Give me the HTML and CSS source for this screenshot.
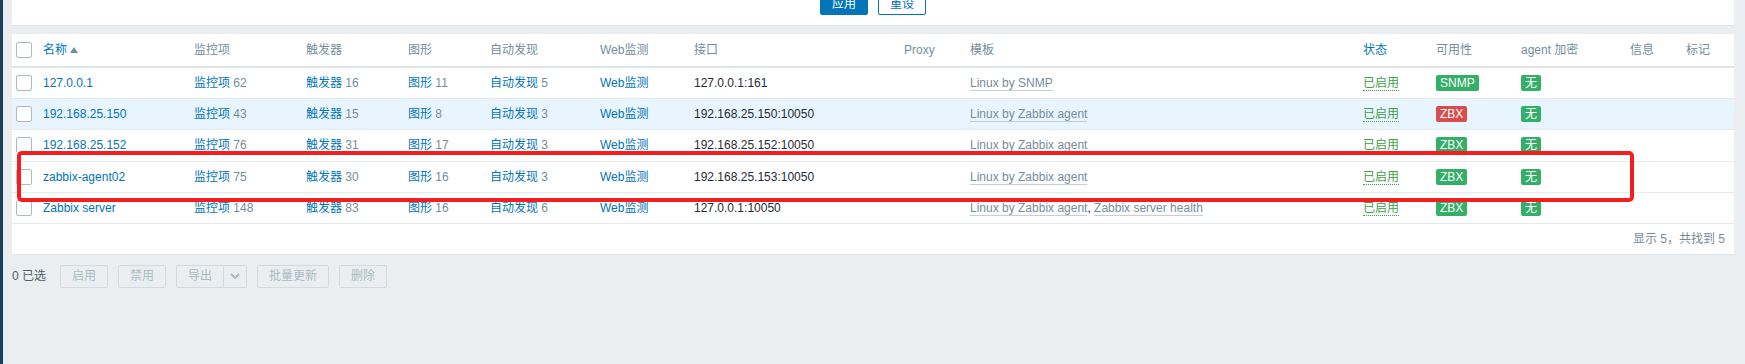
FILE: index.html
```html
<!DOCTYPE html>
<html>
  <head>
    <link rel="stylesheet" href="styles.css">
  </head>
  <body>
    <div class="page">
      <div class="rail"></div>
      <div class="main">
        <div class="filter">
          <button class="btn primary">应用</button>
          <button class="btn outline">重设</button>
        </div>

        <div class="list">
          <table>
            <colgroup>
              <col class="w-cb"><col class="w-name"><col class="w-items"><col class="w-trig"><col class="w-graph">
              <col class="w-disc"><col class="w-web"><col class="w-iface"><col class="w-proxy"><col class="w-tpl">
              <col class="w-status"><col class="w-avail"><col class="w-enc"><col class="w-info"><col class="w-tags">
            </colgroup>
            <thead>
              <tr>
                <th class="cb"><span class="check"></span></th>
                <th><a class="sort">名称</a><span class="arrow"></span></th>
                <th>监控项</th>
                <th>触发器</th>
                <th>图形</th>
                <th>自动发现</th>
                <th>Web监测</th>
                <th>接口</th>
                <th>Proxy</th>
                <th>模板</th>
                <th><a class="sort">状态</a></th>
                <th>可用性</th>
                <th>agent 加密</th>
                <th>信息</th>
                <th>标记</th>
              </tr>
            </thead>
            <tbody>
              <tr>
                <td class="cb"><span class="check"></span></td>
                <td><a>127.0.0.1</a></td>
                <td><a>监控项</a> <sup>62</sup></td>
                <td><a>触发器</a> <sup>16</sup></td>
                <td><a>图形</a> <sup>11</sup></td>
                <td><a>自动发现</a> <sup>5</sup></td>
                <td><a>Web监测</a></td>
                <td class="plain">127.0.0.1:161</td>
                <td></td>
                <td><span class="tpl">Linux by SNMP</span></td>
                <td><span class="on">已启用</span></td>
                <td><span class="badge ok">SNMP</span></td>
                <td><span class="badge ok">无</span></td>
                <td></td>
                <td></td>
              </tr>
              <tr class="hover">
                <td class="cb"><span class="check"></span></td>
                <td><a>192.168.25.150</a></td>
                <td><a>监控项</a> <sup>43</sup></td>
                <td><a>触发器</a> <sup>15</sup></td>
                <td><a>图形</a> <sup>8</sup></td>
                <td><a>自动发现</a> <sup>3</sup></td>
                <td><a>Web监测</a></td>
                <td class="plain">192.168.25.150:10050</td>
                <td></td>
                <td><span class="tpl">Linux by Zabbix agent</span></td>
                <td><span class="on">已启用</span></td>
                <td><span class="badge bad">ZBX</span></td>
                <td><span class="badge ok">无</span></td>
                <td></td>
                <td></td>
              </tr>
              <tr>
                <td class="cb"><span class="check"></span></td>
                <td><a>192.168.25.152</a></td>
                <td><a>监控项</a> <sup>76</sup></td>
                <td><a>触发器</a> <sup>31</sup></td>
                <td><a>图形</a> <sup>17</sup></td>
                <td><a>自动发现</a> <sup>3</sup></td>
                <td><a>Web监测</a></td>
                <td class="plain">192.168.25.152:10050</td>
                <td></td>
                <td><span class="tpl">Linux by Zabbix agent</span></td>
                <td><span class="on">已启用</span></td>
                <td><span class="badge ok">ZBX</span></td>
                <td><span class="badge ok">无</span></td>
                <td></td>
                <td></td>
              </tr>
              <tr>
                <td class="cb"><span class="check"></span></td>
                <td><a>zabbix-agent02</a></td>
                <td><a>监控项</a> <sup>75</sup></td>
                <td><a>触发器</a> <sup>30</sup></td>
                <td><a>图形</a> <sup>16</sup></td>
                <td><a>自动发现</a> <sup>3</sup></td>
                <td><a>Web监测</a></td>
                <td class="plain">192.168.25.153:10050</td>
                <td></td>
                <td><span class="tpl">Linux by Zabbix agent</span></td>
                <td><span class="on">已启用</span></td>
                <td><span class="badge ok">ZBX</span></td>
                <td><span class="badge ok">无</span></td>
                <td></td>
                <td></td>
              </tr>
              <tr>
                <td class="cb"><span class="check"></span></td>
                <td><a>Zabbix server</a></td>
                <td><a>监控项</a> <sup>148</sup></td>
                <td><a>触发器</a> <sup>83</sup></td>
                <td><a>图形</a> <sup>16</sup></td>
                <td><a>自动发现</a> <sup>6</sup></td>
                <td><a>Web监测</a></td>
                <td class="plain">127.0.0.1:10050</td>
                <td></td>
                <td><span class="tpl">Linux by Zabbix agent</span>, <span class="tpl">Zabbix server health</span></td>
                <td><span class="on">已启用</span></td>
                <td><span class="badge ok">ZBX</span></td>
                <td><span class="badge ok">无</span></td>
                <td></td>
                <td></td>
              </tr>
            </tbody>
          </table>
          <div class="paging">显示 5，共找到 5</div>
        </div>

        <div class="actions">
          <span class="selected">0 已选</span>
          <button class="btn off">启用</button>
          <button class="btn off">禁用</button>
          <span class="split">
            <button class="btn off">导出</button><button class="btn off caret">
              <svg width="10" height="6" viewBox="0 0 10 6"><path d="M1 1l4 4 4-4" fill="none" stroke="#acbbc2" stroke-width="2"/></svg>
            </button>
          </span>
          <button class="btn off wide">批量更新</button>
          <button class="btn off">删除</button>
        </div>
      </div>
    </div>
    <div class="mark"></div>
  </body>
</html>
```

FILE: styles.css
```css
body { margin:0; background:#ebeef0; font-family:"Liberation Sans", Arial, "Noto Sans CJK SC", sans-serif; font-size:12px; line-height:14px; color:#1f2c33; }
.page { display:flex; min-height:364px; }
.rail { width:3px; background:#173f5f; flex-shrink:0; }
.main { flex:1; padding:0 11px 0 9px; }

.btn { font-family:inherit; font-size:12px; line-height:14px; height:23px; padding:0 10px; border-radius:2px; border:1px solid transparent; cursor:pointer; }
.btn.primary { background:#0275b8; border-color:#0275b8; color:#fff; width:48px; }
.btn.outline { background:#fff; border-color:#0275b8; color:#0275b8; width:48px; }
.btn.off { background:#ebeef0; border-color:#d4dadd; color:#acbbc2; width:48px; padding:0; }
.btn.off.wide { width:72px; }

.filter { background:#fff; height:26px; border-bottom:1px solid #dfe4e7; box-sizing:border-box; display:flex; justify-content:center; gap:10px; overflow:hidden; }
.filter .btn { margin-top:-8px; }

.list { background:#fff; margin-top:8px; border-bottom:1px solid #dfe4e7; }
table { width:100%; table-layout:fixed; border-collapse:collapse; font-size:12px; }
.w-cb { width:26px; } .w-name { width:151px; } .w-items { width:112px; } .w-trig { width:102px; }
.w-graph { width:82px; } .w-disc { width:110px; } .w-web { width:94px; } .w-iface { width:210px; }
.w-proxy { width:66px; } .w-tpl { width:393px; } .w-status { width:73px; } .w-avail { width:85px; }
.w-enc { width:109px; } .w-info { width:56px; } .w-tags { width:53px; }

th { height:32px; padding:0 5px; text-align:left; font-weight:normal; color:#768d99; border-bottom:2px solid #dfe4e7; white-space:nowrap; }
td { height:30.2px; padding:0 5px; border-bottom:1px solid #e6eaec; white-space:nowrap; vertical-align:middle; }
tr.hover td { background:#e8f5ff; }
th.cb, td.cb { padding:0 0 0 4px; }
.check { display:block; width:14px; height:14px; border:1px solid #acbbc2; border-radius:2px; background:#fff; }

a { color:#0275b8; text-decoration:none; }
a.sort { color:#0275b8; }
.arrow { display:inline-block; margin-left:3px; border-left:4px solid transparent; border-right:4px solid transparent; border-bottom:6px solid #768d99; vertical-align:1px; }
sup { vertical-align:baseline; font-size:12px; color:#768d99; }
.plain { color:#1f2c33; }
.tpl { color:#768d99; border-bottom:1px solid #c5cfd4; }
.on { color:#429e47; border-bottom:1px dotted #429e47; }
.badge { display:inline-block; height:16px; line-height:16px; padding:0 4px; border-radius:2px; color:#fff; }
.badge.ok { background:#34af67; }
.badge.bad { background:#d64e4e; }

.paging { height:30px; line-height:30px; text-align:right; padding-right:9px; color:#768d99; }

.actions { display:flex; align-items:center; gap:10px; margin-top:10px; }
.selected { color:#4f5f68; margin-right:4px; }
.split { display:flex; }
.split .btn { border-radius:2px 0 0 2px; }
.split .btn.caret { width:23px; border-left:none; border-radius:0 2px 2px 0; display:flex; align-items:center; justify-content:center; }

.mark { position:absolute; left:17px; top:151px; width:1617px; height:51px; box-sizing:border-box; border:4px solid #f51d1d; border-radius:5px; }
```
